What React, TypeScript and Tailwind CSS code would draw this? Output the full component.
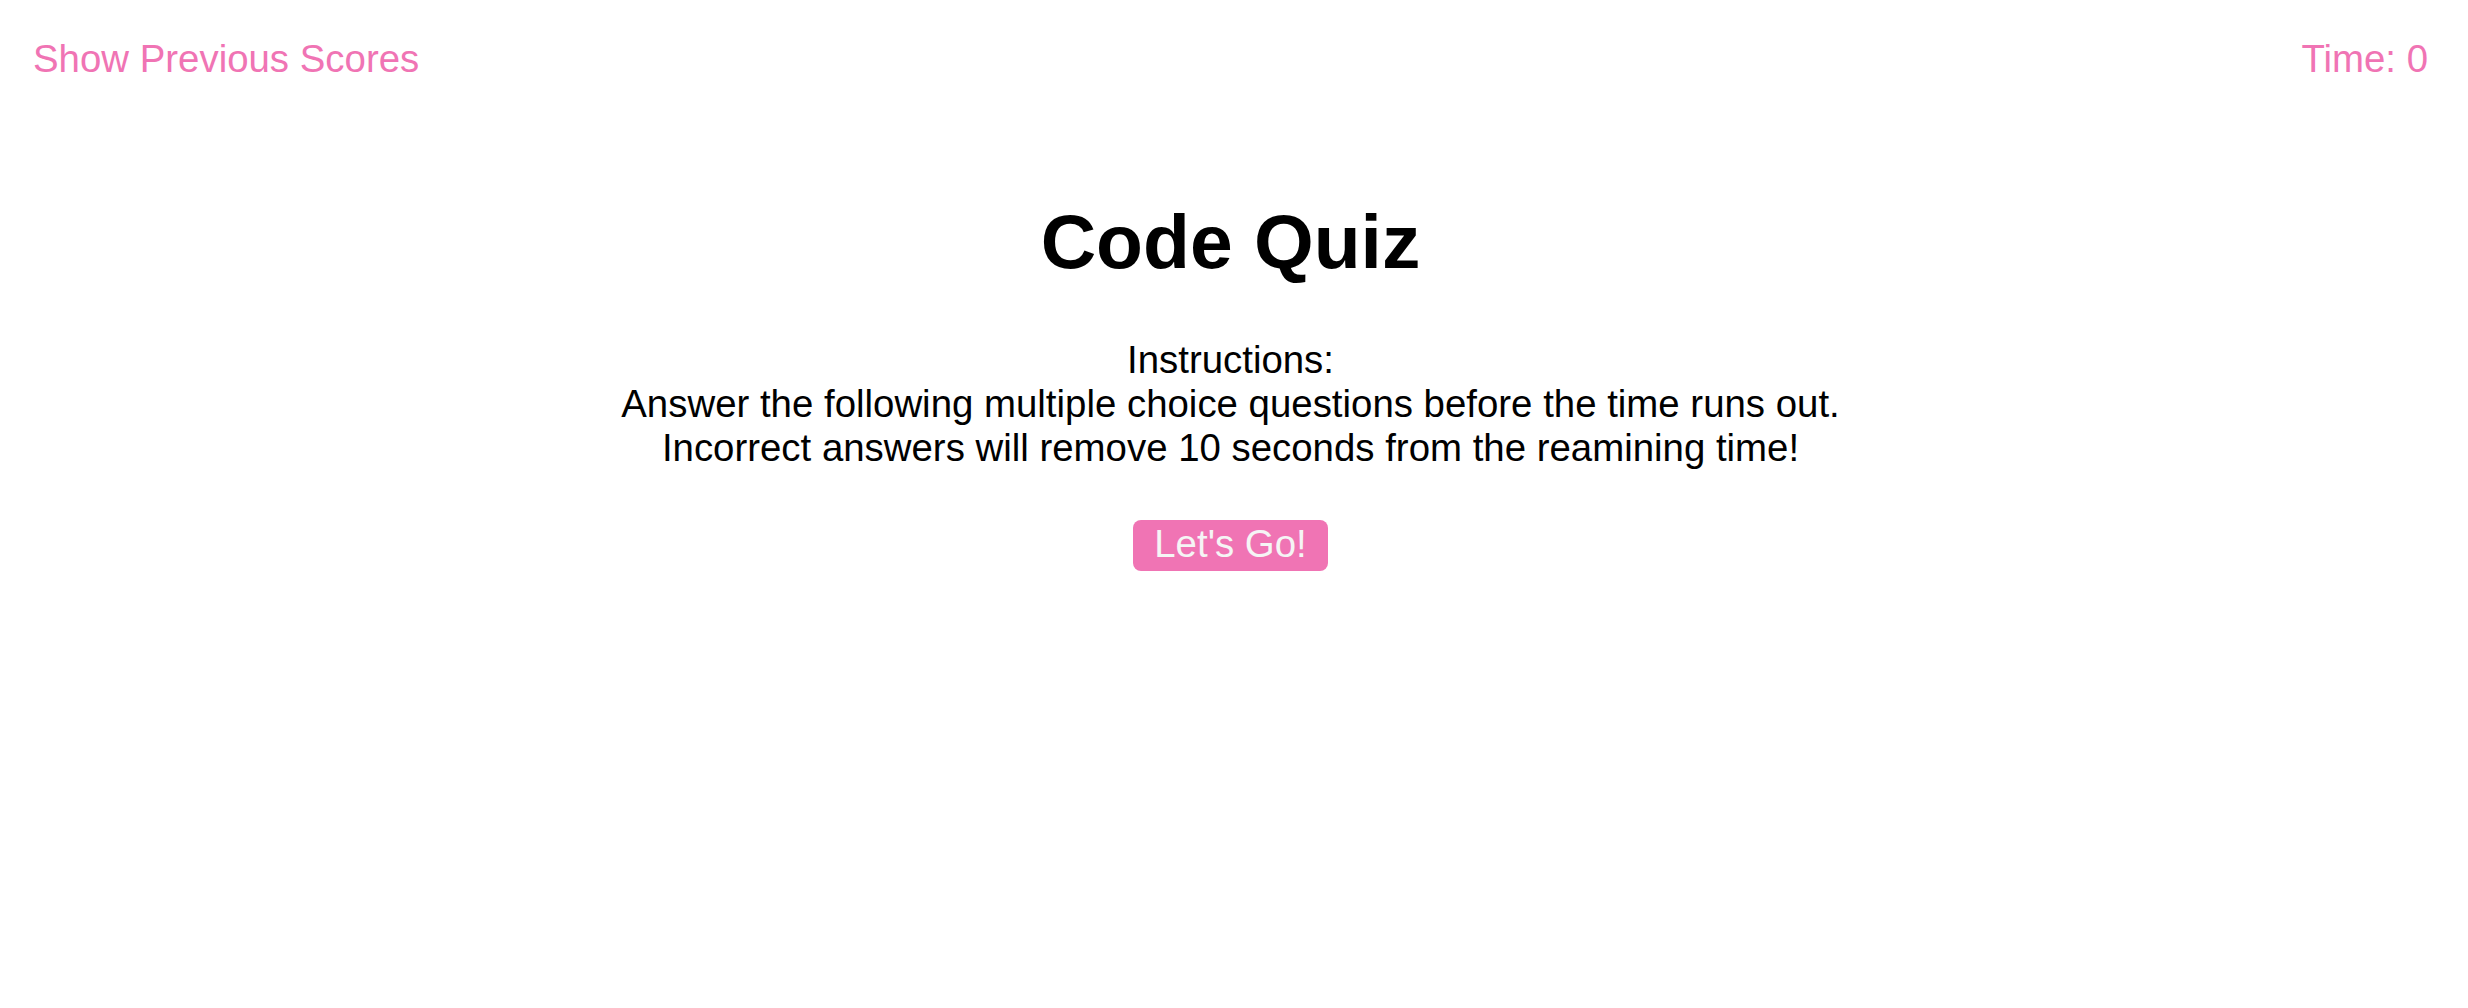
import React from "react";

export default function App() {
  return (
    <div className="min-h-screen bg-white text-black leading-[normal] font-['Liberation_Sans',Arial,sans-serif]">
      {/* top bar */}
      <header className="flex justify-between pt-[37px] pl-[33px] pr-[40px] text-[38.4px] leading-[normal] text-[#f074b4]">
        <a href="#" className="cursor-pointer">Show Previous Scores</a>
        <span>Time: 0</span>
      </header>

      <main className="flex flex-col items-center pl-[33px] pr-[40px] text-center">
        <h1 className="mt-[116px] text-[76.8px] leading-[normal] font-bold">Code Quiz</h1>
        <p className="mt-[52px] text-[38.4px] leading-[normal]">
          Instructions:
          <br />
          Answer the following multiple choice questions before the time runs out.
          <br />
          Incorrect answers will remove 10 seconds from the reamining time!
        </p>
        <button className="mt-[50px] h-[51px] px-[21px] pb-[4px] leading-[47px] rounded-[8px] bg-[#f074b4] text-[38.4px] text-[#f5f5f5]">
          Let's Go!
        </button>
      </main>
    </div>
  );
}
